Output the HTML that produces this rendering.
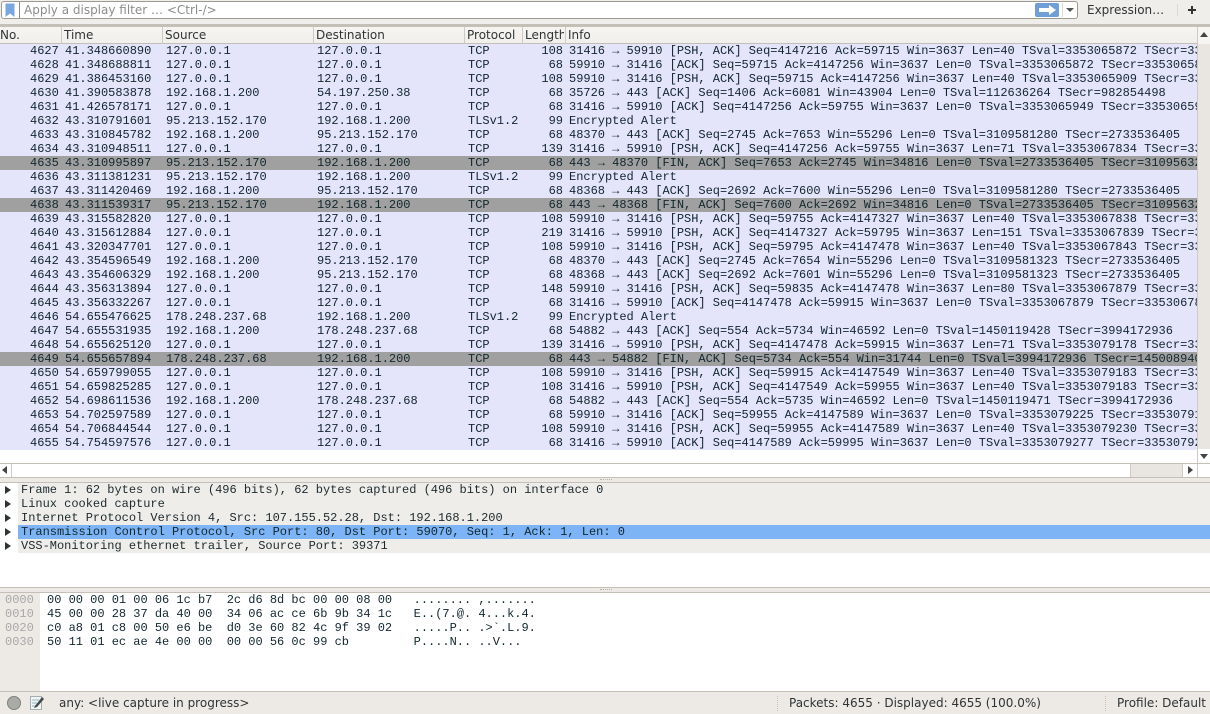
<!DOCTYPE html>
<html><head><meta charset="utf-8">
<style>
html,body{margin:0;padding:0;background:#edeae6;}
body{width:1210px;height:714px;overflow:hidden;position:relative;font-family:"DejaVu Sans","Liberation Sans",sans-serif;font-size:12px;color:#2e3436;}
.a{position:absolute;}
.m{font-family:"Liberation Mono",monospace;font-size:12px;line-height:14px;white-space:pre;letter-spacing:-0.012px;}
#list{left:0;top:44px;width:1197px;height:406px;overflow:hidden;background:#e4e4fb;white-space:normal;}
.r{position:relative;height:14px;width:1197px;overflow:hidden;color:#12272e;}
.r.d{background:#a0a0a0;}
.r span{position:absolute;top:0;white-space:pre;}
.n{left:30px;}
.t{left:65px;}.s{left:166px;}.e{left:317px;}.p{left:468px;}.l{right:634px;text-align:right;}.i{left:569px;}
.h{position:absolute;top:27px;height:17px;line-height:16px;background:linear-gradient(#f7f5f2,#f1efeb);border-bottom:1px solid #c4c0b8;box-sizing:border-box;border-right:1px solid #cfcbc4;overflow:hidden;white-space:nowrap;font-size:12px;color:#2e3436;padding-left:2px;}
.tri{position:absolute;width:0;height:0;}
.dr{position:absolute;left:18px;height:14px;background:#efedea;color:#1c2a2e;padding-left:3px;width:1189px;}
.dr.sel{background:#7cb4f5;color:#12272e;}
.ar{position:absolute;left:5px;width:0;height:0;border-left:6px solid #2e3436;border-top:4px solid transparent;border-bottom:4px solid transparent;}
.grip{position:absolute;left:600px;width:12px;height:1px;border-top:1px dotted #b5b2aa;}
</style></head><body>

<div class="a" style="left:0;top:0;width:1210px;height:25px;background:#f0eeea;"></div>
<div class="a" style="left:1px;top:1px;width:1075px;height:16px;background:#fff;border:1px solid #9d9a92;border-radius:3px;box-sizing:content-box;"></div>
<svg class="a" style="left:5px;top:3px" width="10" height="15"><path d="M0.5 0.5H9.5V14L5 10.5L0.5 14Z" fill="#7ba7e0"/></svg>
<div class="a" style="left:19px;top:2px;width:1px;height:16px;background:#8f8c85;"></div>
<div class="a" style="left:24px;top:2px;line-height:17px;color:#8b8d8d;white-space:pre;">Apply a display filter … &lt;Ctrl-/&gt;</div>
<div class="a" style="left:1035px;top:3px;width:24px;height:14px;background:#6f9fd6;border-radius:2px;"></div>
<svg class="a" style="left:1035px;top:3px" width="24" height="14"><path d="M4 5H14V2L21 7L14 12V9H4Z" fill="#fff"/></svg>
<div class="a" style="left:1062px;top:3px;width:1px;height:14px;background:#d8d6d0;"></div>
<div class="tri" style="left:1066px;top:8px;border-left:4px solid transparent;border-right:4px solid transparent;border-top:4px solid #555;"></div>
<div class="a" style="left:1087px;top:2px;line-height:17px;font-size:12px;color:#2e3436;">Expression…</div>
<div class="a" style="left:1177px;top:4px;width:1px;height:12px;background:#dcdad4;"></div>
<div class="a" style="left:1188px;top:9px;width:8px;height:2px;background:#333;"></div>
<div class="a" style="left:1191px;top:6px;width:2px;height:8px;background:#333;"></div>
<div class="a" style="left:0;top:24px;width:1210px;height:3px;background:#c4c0b8;"></div>

<div class="h" style="left:0;width:62px;padding-left:0;">No.</div>
<div class="h" style="left:62px;width:101px;">Time</div>
<div class="h" style="left:163px;width:151px;">Source</div>
<div class="h" style="left:314px;width:151px;">Destination</div>
<div class="h" style="left:465px;width:58px;">Protocol</div>
<div class="h" style="left:523px;width:43px;"><span style="display:inline-block;width:39px;overflow:hidden;vertical-align:top;">Length</span></div>
<div class="h" style="left:566px;width:631px;border-right:0;">Info</div>

<div class="a m" id="list"><div class="r"><span class="n">4627</span><span class="t">41.348660890</span><span class="s">127.0.0.1</span><span class="e">127.0.0.1</span><span class="p">TCP</span><span class="l">108</span><span class="i">31416 → 59910 [PSH, ACK] Seq=4147216 Ack=59715 Win=3637 Len=40 TSval=3353065872 TSecr=3353065872</span></div><div class="r"><span class="n">4628</span><span class="t">41.348688811</span><span class="s">127.0.0.1</span><span class="e">127.0.0.1</span><span class="p">TCP</span><span class="l">68</span><span class="i">59910 → 31416 [ACK] Seq=59715 Ack=4147256 Win=3637 Len=0 TSval=3353065872 TSecr=3353065872</span></div><div class="r"><span class="n">4629</span><span class="t">41.386453160</span><span class="s">127.0.0.1</span><span class="e">127.0.0.1</span><span class="p">TCP</span><span class="l">108</span><span class="i">59910 → 31416 [PSH, ACK] Seq=59715 Ack=4147256 Win=3637 Len=40 TSval=3353065909 TSecr=3353065872</span></div><div class="r"><span class="n">4630</span><span class="t">41.390583878</span><span class="s">192.168.1.200</span><span class="e">54.197.250.38</span><span class="p">TCP</span><span class="l">68</span><span class="i">35726 → 443 [ACK] Seq=1406 Ack=6081 Win=43904 Len=0 TSval=112636264 TSecr=982854498</span></div><div class="r"><span class="n">4631</span><span class="t">41.426578171</span><span class="s">127.0.0.1</span><span class="e">127.0.0.1</span><span class="p">TCP</span><span class="l">68</span><span class="i">31416 → 59910 [ACK] Seq=4147256 Ack=59755 Win=3637 Len=0 TSval=3353065949 TSecr=3353065909</span></div><div class="r"><span class="n">4632</span><span class="t">43.310791601</span><span class="s">95.213.152.170</span><span class="e">192.168.1.200</span><span class="p">TLSv1.2</span><span class="l">99</span><span class="i">Encrypted Alert</span></div><div class="r"><span class="n">4633</span><span class="t">43.310845782</span><span class="s">192.168.1.200</span><span class="e">95.213.152.170</span><span class="p">TCP</span><span class="l">68</span><span class="i">48370 → 443 [ACK] Seq=2745 Ack=7653 Win=55296 Len=0 TSval=3109581280 TSecr=2733536405</span></div><div class="r"><span class="n">4634</span><span class="t">43.310948511</span><span class="s">127.0.0.1</span><span class="e">127.0.0.1</span><span class="p">TCP</span><span class="l">139</span><span class="i">31416 → 59910 [PSH, ACK] Seq=4147256 Ack=59755 Win=3637 Len=71 TSval=3353067834 TSecr=3353065909</span></div><div class="r d"><span class="n">4635</span><span class="t">43.310995897</span><span class="s">95.213.152.170</span><span class="e">192.168.1.200</span><span class="p">TCP</span><span class="l">68</span><span class="i">443 → 48370 [FIN, ACK] Seq=7653 Ack=2745 Win=34816 Len=0 TSval=2733536405 TSecr=3109563280</span></div><div class="r"><span class="n">4636</span><span class="t">43.311381231</span><span class="s">95.213.152.170</span><span class="e">192.168.1.200</span><span class="p">TLSv1.2</span><span class="l">99</span><span class="i">Encrypted Alert</span></div><div class="r"><span class="n">4637</span><span class="t">43.311420469</span><span class="s">192.168.1.200</span><span class="e">95.213.152.170</span><span class="p">TCP</span><span class="l">68</span><span class="i">48368 → 443 [ACK] Seq=2692 Ack=7600 Win=55296 Len=0 TSval=3109581280 TSecr=2733536405</span></div><div class="r d"><span class="n">4638</span><span class="t">43.311539317</span><span class="s">95.213.152.170</span><span class="e">192.168.1.200</span><span class="p">TCP</span><span class="l">68</span><span class="i">443 → 48368 [FIN, ACK] Seq=7600 Ack=2692 Win=34816 Len=0 TSval=2733536405 TSecr=3109563280</span></div><div class="r"><span class="n">4639</span><span class="t">43.315582820</span><span class="s">127.0.0.1</span><span class="e">127.0.0.1</span><span class="p">TCP</span><span class="l">108</span><span class="i">59910 → 31416 [PSH, ACK] Seq=59755 Ack=4147327 Win=3637 Len=40 TSval=3353067838 TSecr=3353067834</span></div><div class="r"><span class="n">4640</span><span class="t">43.315612884</span><span class="s">127.0.0.1</span><span class="e">127.0.0.1</span><span class="p">TCP</span><span class="l">219</span><span class="i">31416 → 59910 [PSH, ACK] Seq=4147327 Ack=59795 Win=3637 Len=151 TSval=3353067839 TSecr=3353067838</span></div><div class="r"><span class="n">4641</span><span class="t">43.320347701</span><span class="s">127.0.0.1</span><span class="e">127.0.0.1</span><span class="p">TCP</span><span class="l">108</span><span class="i">59910 → 31416 [PSH, ACK] Seq=59795 Ack=4147478 Win=3637 Len=40 TSval=3353067843 TSecr=3353067839</span></div><div class="r"><span class="n">4642</span><span class="t">43.354596549</span><span class="s">192.168.1.200</span><span class="e">95.213.152.170</span><span class="p">TCP</span><span class="l">68</span><span class="i">48370 → 443 [ACK] Seq=2745 Ack=7654 Win=55296 Len=0 TSval=3109581323 TSecr=2733536405</span></div><div class="r"><span class="n">4643</span><span class="t">43.354606329</span><span class="s">192.168.1.200</span><span class="e">95.213.152.170</span><span class="p">TCP</span><span class="l">68</span><span class="i">48368 → 443 [ACK] Seq=2692 Ack=7601 Win=55296 Len=0 TSval=3109581323 TSecr=2733536405</span></div><div class="r"><span class="n">4644</span><span class="t">43.356313894</span><span class="s">127.0.0.1</span><span class="e">127.0.0.1</span><span class="p">TCP</span><span class="l">148</span><span class="i">59910 → 31416 [PSH, ACK] Seq=59835 Ack=4147478 Win=3637 Len=80 TSval=3353067879 TSecr=3353067843</span></div><div class="r"><span class="n">4645</span><span class="t">43.356332267</span><span class="s">127.0.0.1</span><span class="e">127.0.0.1</span><span class="p">TCP</span><span class="l">68</span><span class="i">31416 → 59910 [ACK] Seq=4147478 Ack=59915 Win=3637 Len=0 TSval=3353067879 TSecr=3353067879</span></div><div class="r"><span class="n">4646</span><span class="t">54.655476625</span><span class="s">178.248.237.68</span><span class="e">192.168.1.200</span><span class="p">TLSv1.2</span><span class="l">99</span><span class="i">Encrypted Alert</span></div><div class="r"><span class="n">4647</span><span class="t">54.655531935</span><span class="s">192.168.1.200</span><span class="e">178.248.237.68</span><span class="p">TCP</span><span class="l">68</span><span class="i">54882 → 443 [ACK] Seq=554 Ack=5734 Win=46592 Len=0 TSval=1450119428 TSecr=3994172936</span></div><div class="r"><span class="n">4648</span><span class="t">54.655625120</span><span class="s">127.0.0.1</span><span class="e">127.0.0.1</span><span class="p">TCP</span><span class="l">139</span><span class="i">31416 → 59910 [PSH, ACK] Seq=4147478 Ack=59915 Win=3637 Len=71 TSval=3353079178 TSecr=3353067879</span></div><div class="r d"><span class="n">4649</span><span class="t">54.655657894</span><span class="s">178.248.237.68</span><span class="e">192.168.1.200</span><span class="p">TCP</span><span class="l">68</span><span class="i">443 → 54882 [FIN, ACK] Seq=5734 Ack=554 Win=31744 Len=0 TSval=3994172936 TSecr=1450089400</span></div><div class="r"><span class="n">4650</span><span class="t">54.659799055</span><span class="s">127.0.0.1</span><span class="e">127.0.0.1</span><span class="p">TCP</span><span class="l">108</span><span class="i">59910 → 31416 [PSH, ACK] Seq=59915 Ack=4147549 Win=3637 Len=40 TSval=3353079183 TSecr=3353079178</span></div><div class="r"><span class="n">4651</span><span class="t">54.659825285</span><span class="s">127.0.0.1</span><span class="e">127.0.0.1</span><span class="p">TCP</span><span class="l">108</span><span class="i">31416 → 59910 [PSH, ACK] Seq=4147549 Ack=59955 Win=3637 Len=40 TSval=3353079183 TSecr=3353079183</span></div><div class="r"><span class="n">4652</span><span class="t">54.698611536</span><span class="s">192.168.1.200</span><span class="e">178.248.237.68</span><span class="p">TCP</span><span class="l">68</span><span class="i">54882 → 443 [ACK] Seq=554 Ack=5735 Win=46592 Len=0 TSval=1450119471 TSecr=3994172936</span></div><div class="r"><span class="n">4653</span><span class="t">54.702597589</span><span class="s">127.0.0.1</span><span class="e">127.0.0.1</span><span class="p">TCP</span><span class="l">68</span><span class="i">59910 → 31416 [ACK] Seq=59955 Ack=4147589 Win=3637 Len=0 TSval=3353079225 TSecr=3353079183</span></div><div class="r"><span class="n">4654</span><span class="t">54.706844544</span><span class="s">127.0.0.1</span><span class="e">127.0.0.1</span><span class="p">TCP</span><span class="l">108</span><span class="i">59910 → 31416 [PSH, ACK] Seq=59955 Ack=4147589 Win=3637 Len=40 TSval=3353079230 TSecr=3353079183</span></div><div class="r"><span class="n">4655</span><span class="t">54.754597576</span><span class="s">127.0.0.1</span><span class="e">127.0.0.1</span><span class="p">TCP</span><span class="l">68</span><span class="i">31416 → 59910 [ACK] Seq=4147589 Ack=59995 Win=3637 Len=0 TSval=3353079277 TSecr=3353079230</span></div></div>

<div class="a" style="left:0;top:450px;width:1197px;height:13px;background:#fff;"></div>
<div class="a" style="left:1197px;top:27px;width:13px;height:436px;background:#e9e6e1;border-left:1px solid #cfcbc4;box-sizing:border-box;"></div>
<div class="a" style="left:1198px;top:27px;width:12px;height:17px;background:#f7f5f2;"></div>
<div class="tri" style="left:1200px;top:32px;border-left:4px solid transparent;border-right:4px solid transparent;border-bottom:5px solid #444;"></div>
<div class="a" style="left:1198px;top:449px;width:12px;height:14px;background:#fff;"></div>
<div class="tri" style="left:1200px;top:454px;border-left:4px solid transparent;border-right:4px solid transparent;border-top:5px solid #444;"></div>

<div class="a" style="left:0;top:463px;width:1210px;height:15px;background:#fff;border-top:1px solid #c4c0b8;border-bottom:1px solid #c4c0b8;box-sizing:border-box;"></div>
<div class="a" style="left:11px;top:464px;width:1px;height:13px;background:#cfcbc4;"></div>
<div class="tri" style="left:2px;top:466px;border-top:4px solid transparent;border-bottom:4px solid transparent;border-right:5px solid #444;"></div>
<div class="a" style="left:1130px;top:464px;width:53px;height:13px;background:#e9e6e1;border-right:1px solid #cfcbc4;border-left:1px solid #cfcbc4;box-sizing:border-box;"></div>
<div class="tri" style="left:1188px;top:466px;border-top:4px solid transparent;border-bottom:4px solid transparent;border-left:5px solid #444;"></div>
<div class="a" style="left:1197px;top:464px;width:1px;height:13px;background:#cfcbc4;"></div>
<div class="a" style="left:0;top:478px;width:1210px;height:4px;background:#edeae6;"></div>
<div class="grip" style="top:479px;"></div>
<div class="a" style="left:0;top:482px;width:1210px;height:1px;background:#c4c0b8;"></div>

<div class="a" style="left:0;top:483px;width:1210px;height:104px;background:#fff;"></div>
<div class="dr m" style="top:483px;">Frame 1: 62 bytes on wire (496 bits), 62 bytes captured (496 bits) on interface 0</div>
<div class="dr m" style="top:497px;">Linux cooked capture</div>
<div class="dr m" style="top:511px;">Internet Protocol Version 4, Src: 107.155.52.28, Dst: 192.168.1.200</div>
<div class="dr m sel" style="top:525px;">Transmission Control Protocol, Src Port: 80, Dst Port: 59070, Seq: 1, Ack: 1, Len: 0</div>
<div class="dr m" style="top:539px;">VSS-Monitoring ethernet trailer, Source Port: 39371</div>
<div class="ar" style="top:486px;"></div>
<div class="ar" style="top:500px;"></div>
<div class="ar" style="top:514px;"></div>
<div class="ar" style="top:528px;"></div>
<div class="ar" style="top:542px;"></div>

<div class="a" style="left:0;top:587px;width:1210px;height:1px;background:#c4c0b8;"></div>
<div class="a" style="left:0;top:588px;width:1210px;height:4px;background:#edeae6;"></div>
<div class="grip" style="top:589px;"></div>
<div class="a" style="left:0;top:592px;width:1210px;height:1px;background:#c4c0b8;"></div>
<div class="a" style="left:40px;top:593px;width:1170px;height:98px;background:#fff;"></div>
<div class="a" style="left:0;top:593px;width:40px;height:98px;background:#edeae6;"></div>
<div class="a m" style="left:5px;top:593px;color:#a8a8a8;">0000
0010
0020
0030</div>
<div class="a m" style="left:47px;top:593px;color:#12272e;">00 00 00 01 00 06 1c b7  2c d6 8d bc 00 00 08 00   ........ ,.......
45 00 00 28 37 da 40 00  34 06 ac ce 6b 9b 34 1c   E..(7.@. 4...k.4.
c0 a8 01 c8 00 50 e6 be  d0 3e 60 82 4c 9f 39 02   .....P.. .&gt;`.L.9.
50 11 01 ec ae 4e 00 00  00 00 56 0c 99 cb         P....N.. ..V...</div>

<div class="a" style="left:0;top:691px;width:1210px;height:1px;background:#c4c0b8;"></div>
<div class="a" style="left:7px;top:696px;width:14px;height:14px;border-radius:50%;background:#a9aba7;border:1px solid #7f817d;box-sizing:border-box;"></div>
<svg class="a" style="left:30px;top:695px" width="15" height="15"><rect x="0.5" y="1.5" width="11" height="13" fill="#f4f4f0" stroke="#9fb0b8"/><path d="M2 5H9M2 8H7M2 11H6" stroke="#8fb3c8"/><path d="M5 11L12 2L14 4L7 12L4 13Z" fill="#3f4a4a"/></svg>
<div class="a" style="left:59px;top:696px;line-height:15px;white-space:pre;">any: &lt;live capture in progress&gt;</div>
<div class="a" style="left:777px;top:696px;width:0;height:15px;border-left:1px dotted #c8c5bf;"></div>
<div class="a" style="left:789px;top:696px;line-height:15px;white-space:pre;">Packets: 4655 · Displayed: 4655 (100.0%)</div>
<div class="a" style="left:1105px;top:696px;width:0;height:15px;border-left:1px dotted #c8c5bf;"></div>
<div class="a" style="left:1117px;top:696px;line-height:15px;white-space:pre;">Profile: Default</div>
</body></html>
